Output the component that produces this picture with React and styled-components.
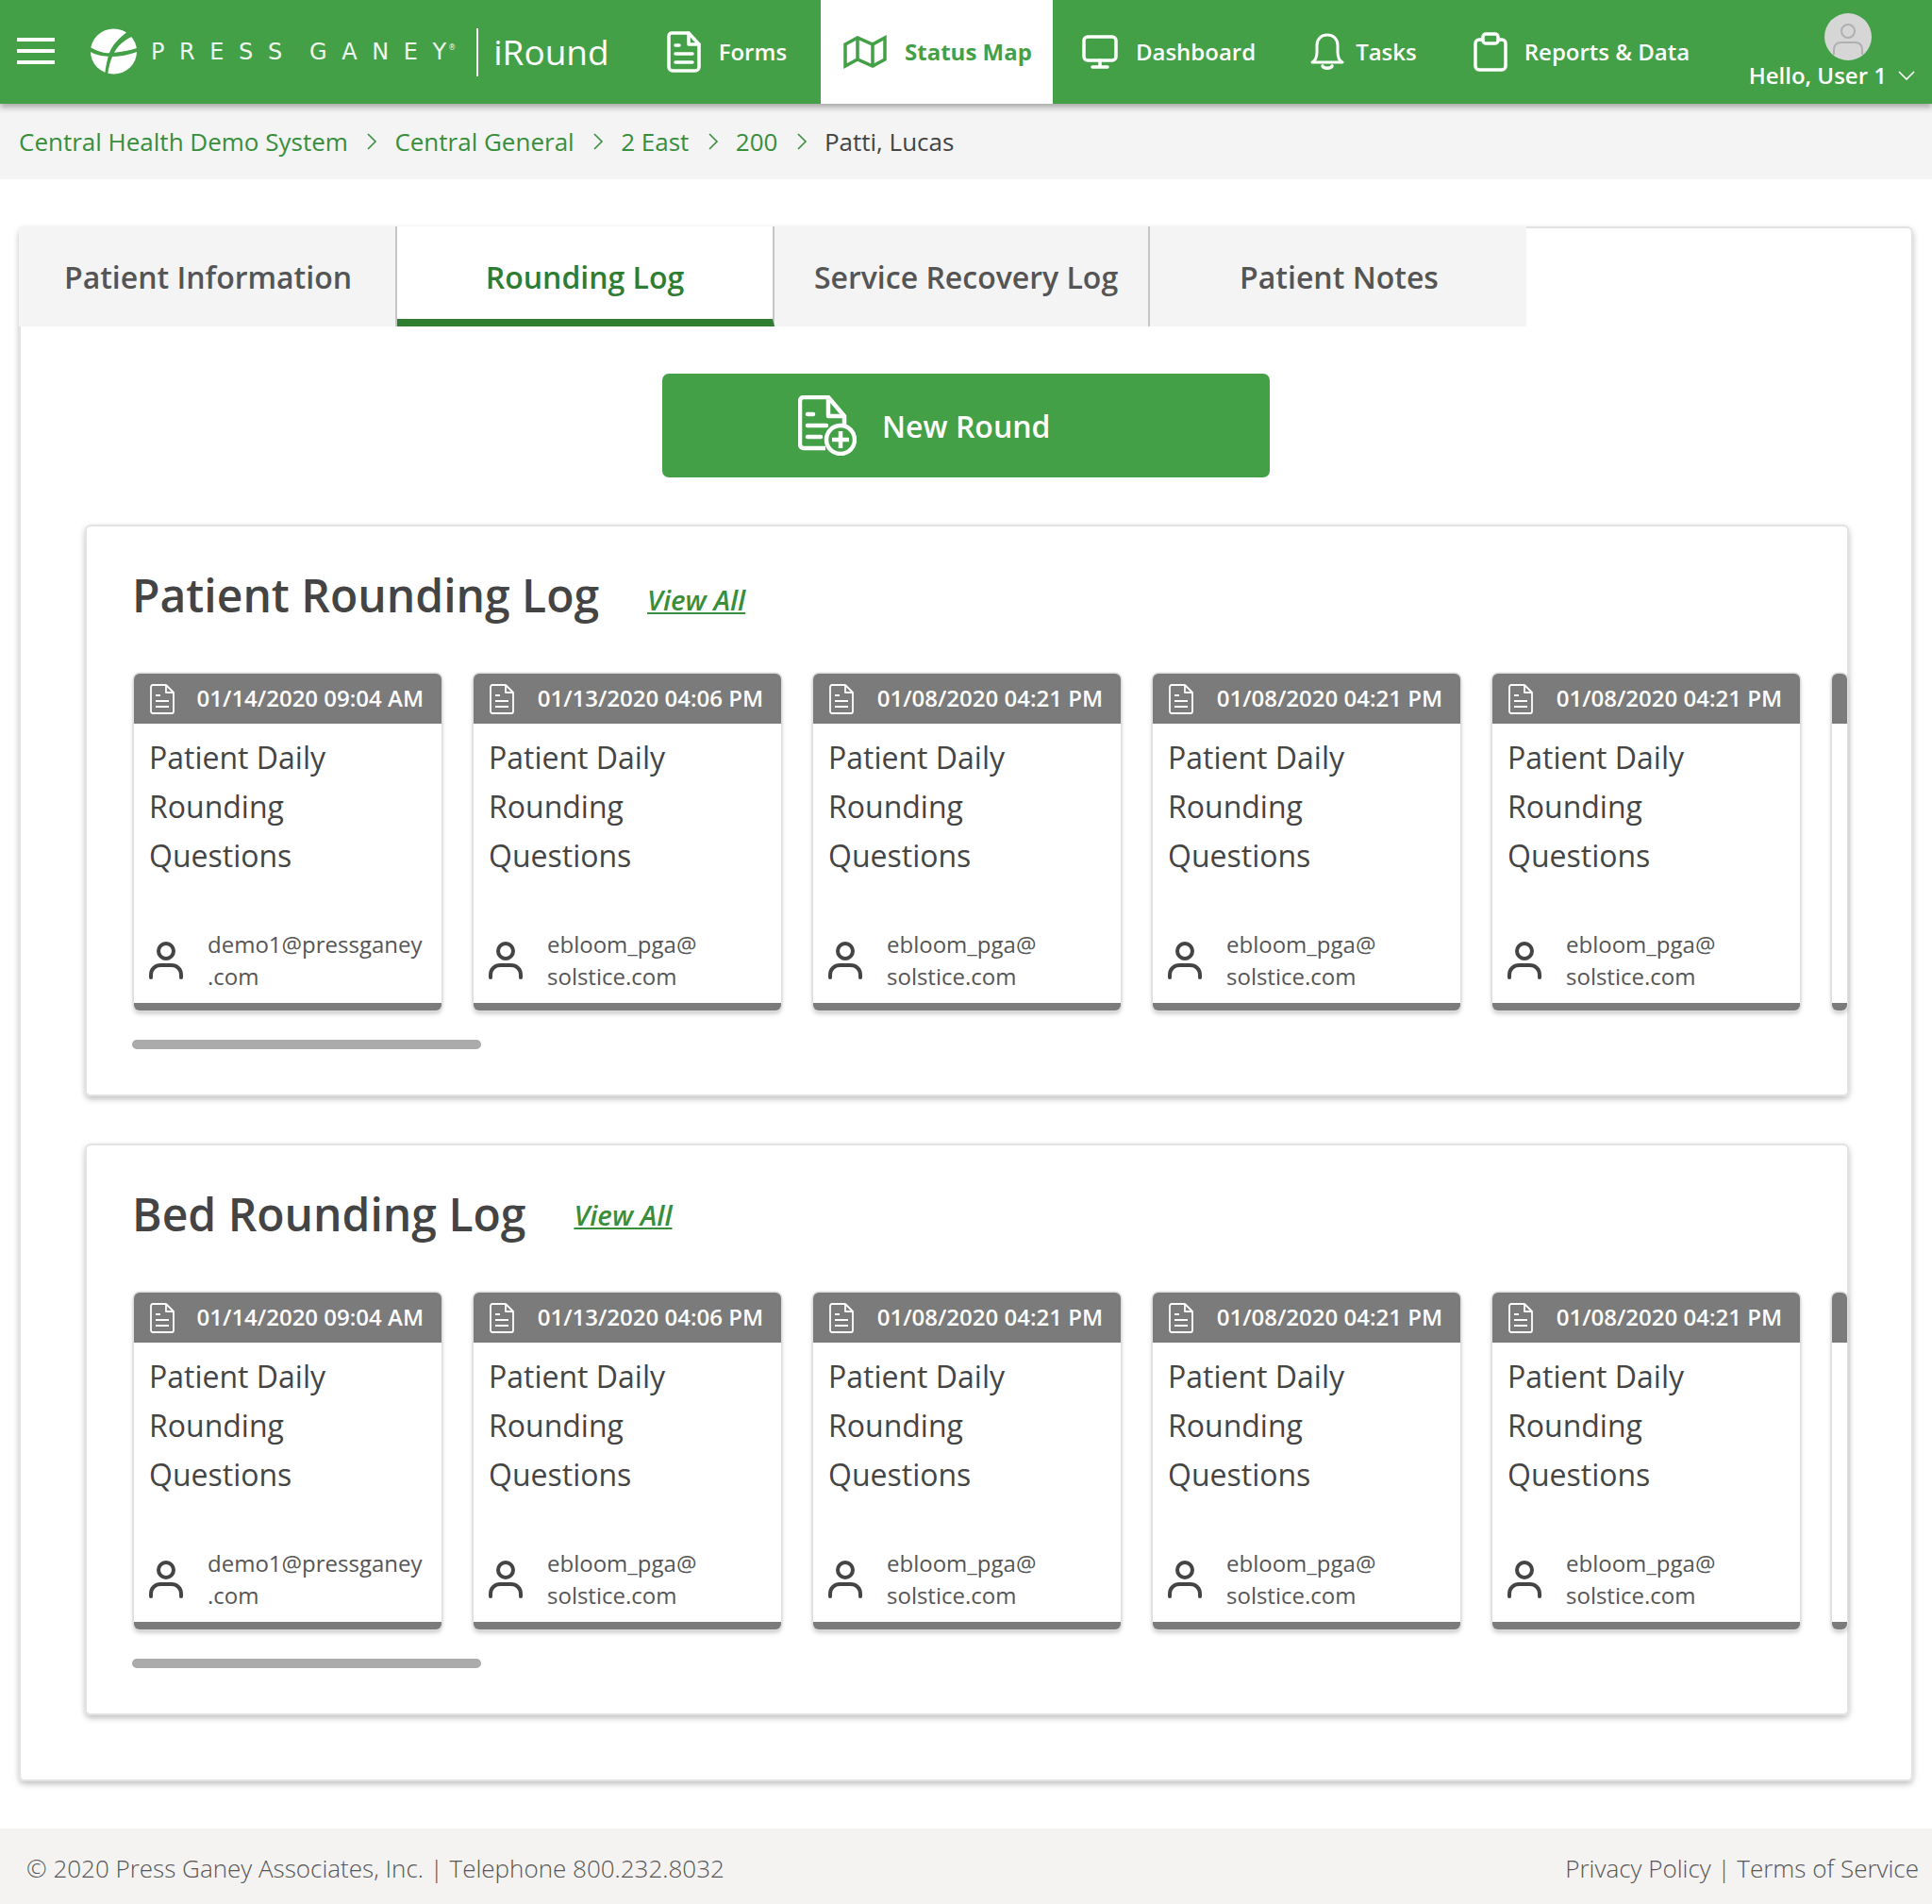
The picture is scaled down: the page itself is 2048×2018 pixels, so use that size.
import React from "react";
import styled, { createGlobalStyle } from "styled-components";

const Global = createGlobalStyle`
  html, body { margin: 0; padding: 0; background: #fff; }
  body { font-family: "Open Sans", "Noto Sans", sans-serif; color: #444; }
  * { box-sizing: border-box; }
`;

const Page = styled.div`
  width: 2048px;
  height: 2018px;
  display: flex;
  flex-direction: column;
`;

const Header = styled.header`
  height: 110px;
  flex: none;
  display: flex;
  align-items: stretch;
  background: #43a047;
  box-shadow: 0 4px 6px rgba(0, 0, 0, 0.3);
  position: relative;
  z-index: 2;
  color: #fff;
`;

const Burger = styled.div`
  width: 40px;
  margin: 40px 0 0 18px;
  height: 28px;
  display: flex;
  flex-direction: column;
  justify-content: space-between;
  flex: none;
  span { display: block; height: 4px; background: #fff; }
`;

const Brand = styled.div`
  display: flex;
  align-items: center;
  margin-left: 38px;
  flex: none;
`;

const Wordmark = styled.span`
  font-family: "DejaVu Sans", "Liberation Sans", sans-serif;
  font-size: 24px;
  font-weight: 400;
  letter-spacing: 15.6px;
  word-spacing: -10px;
  margin-left: 14px;
  white-space: nowrap;
  color: #eef6ee;
  display: flex;
  align-items: flex-start;
  sup { font-size: 8px; letter-spacing: 0; line-height: 1; margin: 6px 0 0 2px; }
`;

const WordEnd = styled.span`
  letter-spacing: 0;
`;

const Divider = styled.span`
  width: 2px;
  height: 51px;
  background: #fff;
  margin: 0 16px 0 22px;
`;

const ProductName = styled.span`
  font-size: 37px;
  font-weight: 400;
  line-height: 1;
  margin-top: -2px;
`;

const Nav = styled.nav`
  display: flex;
  align-items: stretch;
  gap: 12px;
  margin-left: 37px;
  flex: none;
`;

const NavItem = styled.a`
  display: flex;
  align-items: center;
  gap: ${(p) => p.$gap || 19}px;
  padding: 0 ${(p) => p.$right || 24}px 0 ${(p) => p.$left || 24}px;
  font-size: 24px;
  line-height: 32px;
  font-weight: ${(p) => (p.$active ? 700 : 600)};
  color: ${(p) => (p.$active ? "#43a047" : "#fff")};
  background: ${(p) => (p.$active ? "#fff" : "transparent")};
  white-space: nowrap;
  svg { flex: none; display: block; }
  span { margin-top: -1px; }
`;

const UserBlock = styled.div`
  margin-left: auto;
  padding: 14px 18px 0 0;
  display: flex;
  flex-direction: column;
  align-items: flex-end;
`;

const Avatar = styled.div`
  width: 50px;
  height: 50px;
  margin-right: 46px;
  flex: none;
`;

const Hello = styled.div`
  display: flex;
  align-items: center;
  gap: 12px;
  font-size: 24px;
  font-weight: 600;
  line-height: 32px;
  white-space: nowrap;
`;

const Crumbs = styled.div`
  height: 80px;
  flex: none;
  background: #f4f4f4;
  display: flex;
  align-items: center;
  padding-left: 20px;
  font-size: 26px;
  color: #388e3c;
`;

const CrumbSep = styled.span`
  display: flex;
  margin: 0 18px 0 19.5px;
`;

const CrumbCurrent = styled.span`
  color: #444;
`;

const Main = styled.main`
  flex: none;
  height: 1648px;
  margin: 50px 20px 0;
  background: #fff;
  border-radius: 6px;
  box-shadow: inset 0 0 0 2px #e2e2e2, 0 3px 6px rgba(0, 0, 0, 0.25);
`;

const Tabs = styled.div`
  display: flex;
  height: 106px;
`;

const Tab = styled.div`
  width: ${(p) => p.$w}px;
  display: flex;
  align-items: center;
  justify-content: center;
  font-size: 32px;
  font-weight: 600;
  padding-left: ${(p) => p.$nudge || 0}px;
  padding-top: ${(p) => (p.$active ? "8px" : "0")};
  color: ${(p) => (p.$active ? "#2e7d32" : "#555")};
  background: ${(p) => (p.$active ? "#fff" : "#f4f4f4")};
  border-right: ${(p) => (p.$last ? "none" : "2px solid #c6c6c6")};
  border-bottom: ${(p) => (p.$active ? "8px solid #2e7d32" : "none")};
  white-space: nowrap;
`;

const Body = styled.div`
  padding: 50px 68px 0 70px;
  display: flex;
  flex-direction: column;
  gap: 50px;
`;

const NewRound = styled.button`
  width: 644px;
  height: 110px;
  margin: 0 0 0 612px;
  border: 0;
  border-radius: 7px;
  background: #43a047;
  color: #fff;
  font-family: inherit;
  font-size: 32px;
  font-weight: 600;
  display: flex;
  align-items: center;
  padding: 0 0 0 144px;
  gap: 27px;
  svg { flex: none; }
`;

const LogPanel = styled.section`
  height: 606px;
  background: #fff;
  border-radius: 6px;
  padding: 43px 0 0 52px;
  box-shadow: inset 0 0 0 2px #e2e2e2, 0 3px 6px rgba(0, 0, 0, 0.25);
`;

const PanelHead = styled.div`
  display: flex;
  align-items: center;
  height: 64px;
  gap: 51px;
  margin: 0 0 51px -2px;
`;

const PanelTitle = styled.h2`
  margin: 0;
  font-size: 48px;
  font-weight: 600;
  line-height: 64px;
  color: #444;
  white-space: nowrap;
`;

const ViewAll = styled.a`
  font-size: 29.5px;
  font-weight: 600;
  font-style: italic;
  text-decoration: underline;
  color: #388e3c;
  margin-top: ${(p) => p.$drop || 0}px;
  white-space: nowrap;
`;

const CardRow = styled.div`
  display: flex;
  gap: 34px;
  align-items: stretch;
  height: 357px;
`;

const Card = styled.article`
  width: ${(p) => (p.$peek ? "16px" : "326px")};
  flex: none;
  display: flex;
  flex-direction: column;
  background: #fff;
  border-radius: 6px;
  overflow: hidden;
  border-bottom: 8px solid #7b7b7b;
  box-shadow: 0 0 0 1.5px #dedede, 0 3px 5px rgba(0, 0, 0, 0.25);
`;

const CardHead = styled.div`
  height: 53px;
  flex: none;
  background: #7b7b7b;
  color: #fff;
  display: flex;
  align-items: center;
  justify-content: space-between;
  padding: 0 19px 2px 17px;
  font-size: 24px;
  font-weight: 600;
  white-space: nowrap;
  svg { margin-top: 2px; }
`;

const CardTitle = styled.div`
  padding: 10px 16px 0;
  font-size: 32px;
  line-height: 52px;
  color: #444;
  flex: 1;
`;

const CardOwner = styled.div`
  display: flex;
  align-items: center;
  gap: 26px;
  padding: 0 0 11px 16px;
  font-size: 24px;
  line-height: 34px;
  color: #555;
  svg { flex: none; }
`;

const ScrollThumb = styled.div`
  width: 370px;
  height: 10px;
  margin: 31px 0 0 -2px;
  border-radius: 5px;
  background: #ababab;
`;

const Footer = styled.footer`
  margin-top: auto;
  height: 80px;
  flex: none;
  background: #f5f3f2;
  display: flex;
  align-items: center;
  justify-content: space-between;
  padding: 3px 14px 0 28px;
  font-size: 26px;
  font-weight: 300;
  color: #555;
  white-space: nowrap;
`;

const Globe = () => (
  <svg width="50" height="50" viewBox="0 0 50 50">
    <ellipse cx="24.5" cy="24.5" rx="24.5" ry="24" fill="#fff" />
    <path d="M51 3 L40 3 C30 10 23 18 20 26 C18 32 16 40 15 49 L18 50 C19 41 21 34 24 28 C28 19 36 11 51 6Z" fill="#43a047" />
    <path d="M-2 19 C8 25 16 27 23 26 C32 25 42 24 52 20 L52 24 C42 28 31 30 22 30 C12 30 5 28 -2 24Z" fill="#43a047" />
  </svg>
);

const FormsIcon = () => (
  <svg width="36" height="44" viewBox="0 0 36 44" fill="none" stroke="#fff" strokeWidth="3.5" strokeLinecap="round" strokeLinejoin="round">
    <path d="M5 2H23L34 14V38a4 4 0 0 1-4 4H6a4 4 0 0 1-4-4V5a3 3 0 0 1 3-3Z" />
    <path d="M23 2V14H34" />
    <path d="M9 15h4M9 24h18M9 33h18" />
  </svg>
);

const MapIcon = () => (
  <svg width="46" height="36" viewBox="0 0 46 36" fill="none" stroke="#43a047" strokeWidth="3.5" strokeLinejoin="miter">
    <path d="M2 10L15 3L31 10L44 3V26L31 33L15 26L2 33Z" />
    <path d="M15 3V26M31 10V33" />
  </svg>
);

const MonitorIcon = () => (
  <svg width="38" height="36" viewBox="0 0 38 36" fill="none" stroke="#fff" strokeWidth="3.5" strokeLinecap="round" strokeLinejoin="round">
    <rect x="2" y="2" width="34" height="25" rx="4" />
    <path d="M19 27V33M11 34H27" />
  </svg>
);

const BellIcon = () => (
  <svg width="36" height="40" viewBox="0 0 36 40" fill="none" stroke="#fff" strokeWidth="3" strokeLinecap="round" strokeLinejoin="round">
    <path d="M2 31C6 29 7 26 7 20V13C7 6 12 2 18 2S29 6 29 13V20C29 26 30 29 34 31Z" />
    <path d="M13 35C14 38 22 38 23 35" strokeWidth="3.5" />
  </svg>
);

const ClipIcon = () => (
  <svg width="36" height="42" viewBox="0 0 36 42" fill="none" stroke="#fff" strokeWidth="3.5" strokeLinejoin="round">
    <path d="M10 8H6a4 4 0 0 0-4 4V36a4 4 0 0 0 4 4H30a4 4 0 0 0 4-4V12a4 4 0 0 0-4-4H26" />
    <rect x="10" y="2" width="16" height="10" rx="3" />
  </svg>
);

const AvatarIcon = () => (
  <svg width="50" height="50" viewBox="0 0 50 50" fill="none">
    <circle cx="25" cy="25" r="25" fill="#d6d6d6" />
    <circle cx="25" cy="19" r="7" stroke="#b0b0b0" strokeWidth="2" />
    <path d="M10 44V39C10 34 13 31 18 31H32C37 31 40 34 40 39V44" stroke="#b0b0b0" strokeWidth="2" />
  </svg>
);

const Chevron = () => (
  <svg width="12" height="18" viewBox="0 0 12 18" fill="none" stroke="#388e3c" strokeWidth="1.6">
    <path d="M2 1L10 9L2 17" />
  </svg>
);

const ChevronDown = () => (
  <svg width="18" height="10" viewBox="0 0 18 10" fill="none" stroke="#fff" strokeWidth="1.6">
    <path d="M1 1L9 9L17 1" />
  </svg>
);

const NewRoundIcon = () => (
  <svg width="62" height="64" viewBox="0 0 62 64" fill="none" stroke="#fff" strokeWidth="4.5" strokeLinejoin="round">
    <path d="M29 56H6a4 4 0 0 1-4-4V6a4 4 0 0 1 4-4H32L49 22V32" />
    <path d="M32 2V22H49" />
    <path d="M10 20h6M10 32h20M10 44h14" strokeLinecap="round" />
    <circle cx="45" cy="47" r="15" />
    <path d="M45 38V56M36 47H54" />
  </svg>
);

const DocIcon = () => (
  <svg width="26" height="32" viewBox="0 0 26 32" fill="none" stroke="#fff" strokeWidth="1.8" strokeLinejoin="round">
    <path d="M3 1H17L25 9V29a2 2 0 0 1-2 2H3a2 2 0 0 1-2-2V3a2 2 0 0 1 2-2Z" />
    <path d="M17 1V9H25" />
    <path d="M6 12H11M6 18H20M6 24H20" />
  </svg>
);

const PersonIcon = () => (
  <svg width="36" height="40" viewBox="0 0 36 40" fill="none" stroke="#444" strokeWidth="4" strokeLinecap="round">
    <circle cx="18" cy="10" r="8" />
    <path d="M2 38V35C2 29 7 25 12 25H24C29 25 34 29 34 35V38" />
  </svg>
);

const entries = [
  { date: "01/14/2020 09:04 AM", owner: ["demo1@pressganey", ".com"] },
  { date: "01/13/2020 04:06 PM", owner: ["ebloom_pga@", "solstice.com"] },
  { date: "01/08/2020 04:21 PM", owner: ["ebloom_pga@", "solstice.com"] },
  { date: "01/08/2020 04:21 PM", owner: ["ebloom_pga@", "solstice.com"] },
  { date: "01/08/2020 04:21 PM", owner: ["ebloom_pga@", "solstice.com"] },
];

const Log = ({ title, drop }) => (
  <LogPanel>
    <PanelHead>
      <PanelTitle>{title}</PanelTitle>
      <ViewAll $drop={drop}>View All</ViewAll>
    </PanelHead>
    <CardRow>
      {entries.map((e, i) => (
        <Card key={i}>
          <CardHead>
            <DocIcon />
            <span>{e.date}</span>
          </CardHead>
          <CardTitle>Patient Daily<br />Rounding<br />Questions</CardTitle>
          <CardOwner>
            <PersonIcon />
            <div>{e.owner[0]}<br />{e.owner[1]}</div>
          </CardOwner>
        </Card>
      ))}
      <Card $peek><CardHead /></Card>
    </CardRow>
    <ScrollThumb />
  </LogPanel>
);

export default function App() {
  return (
    <Page>
      <Global />
      <Header>
        <Burger><span /><span /><span /></Burger>
        <Brand>
          <Globe />
          <Wordmark>PRESS GANE<WordEnd>Y</WordEnd><sup>®</sup></Wordmark>
          <Divider />
          <ProductName>iRound</ProductName>
        </Brand>
        <Nav>
          <NavItem><FormsIcon /><span>Forms</span></NavItem>
          <NavItem $active $right={22}><MapIcon /><span>Status Map</span></NavItem>
          <NavItem $left={19}><MonitorIcon /><span>Dashboard</span></NavItem>
          <NavItem $gap={12} $left={22}><BellIcon /><span>Tasks</span></NavItem>
          <NavItem $gap={18}><ClipIcon /><span>Reports &amp; Data</span></NavItem>
        </Nav>
        <UserBlock>
          <Avatar><AvatarIcon /></Avatar>
          <Hello>Hello, User 1 <ChevronDown /></Hello>
        </UserBlock>
      </Header>
      <Crumbs>
        <span>Central Health Demo System</span>
        <CrumbSep><Chevron /></CrumbSep>
        <span>Central General</span>
        <CrumbSep><Chevron /></CrumbSep>
        <span>2 East</span>
        <CrumbSep><Chevron /></CrumbSep>
        <span>200</span>
        <CrumbSep><Chevron /></CrumbSep>
        <CrumbCurrent>Patti, Lucas</CrumbCurrent>
      </Crumbs>
      <Main>
        <Tabs>
          <Tab $w={401} $nudge={2}>Patient Information</Tab>
          <Tab $w={400} $active>Rounding Log</Tab>
          <Tab $w={398} $nudge={10}>Service Recovery Log</Tab>
          <Tab $w={399} $last $nudge={2}>Patient Notes</Tab>
        </Tabs>
        <Body>
          <NewRound><NewRoundIcon />New Round</NewRound>
          <Log title="Patient Rounding Log" drop={8} />
          <Log title="Bed Rounding Log" />
        </Body>
      </Main>
      <Footer>
        <span>© 2020 Press Ganey Associates, Inc. | Telephone 800.232.8032</span>
        <span>Privacy Policy | Terms of Service</span>
      </Footer>
    </Page>
  );
}
